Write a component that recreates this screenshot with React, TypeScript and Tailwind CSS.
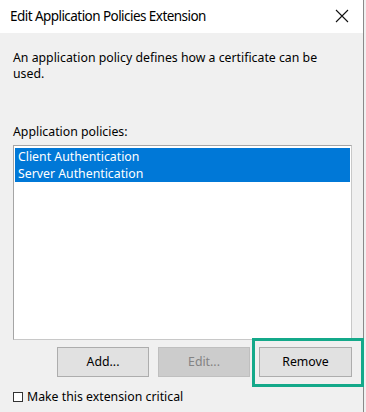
import React from "react";

export default function App() {
  const font = { fontFamily: '"Noto Sans", "Segoe UI", sans-serif' };
  return (
    <div className="w-[366px] h-[412px] bg-[#f0f0f0] flex overflow-hidden" style={font}>
      <div className="relative w-[364px] h-full border-r border-[#8a8a8a] flex flex-col text-black">
        <div className="h-[33px] bg-white flex items-center justify-between pl-[10px] pr-[14px] shrink-0">
          <span className="text-[13.5px] leading-none tracking-[-0.55px]">Edit Application Policies Extension</span>
          <svg width="14" height="14" viewBox="0 0 14 14" className="mt-[-2px]">
            <path d="M1 1 L13 13 M13 1 L1 13" stroke="#111" strokeWidth="1.1" />
          </svg>
        </div>
        <div className="flex flex-col px-[13px] pt-[17px]">
          <p className="text-[12.3px] leading-[16px] w-[330px]">
            An application policy defines how a certificate can be used.
          </p>
          <p className="text-[12.3px] leading-[16px] mt-[42px] mb-[5px]">Application policies:</p>
          <div className="w-[339px] h-[195px] bg-white border border-[#a5a5a5] border-r-[#c8c8c8] border-b-[#c8c8c8] p-[1px] pt-[2px]">
            <div className="h-[17px] bg-[#0078d7] text-white text-[12.3px] leading-[17px] pl-[3px]">Client Authentication</div>
            <div className="h-[17px] bg-[#0078d7] text-white text-[12.3px] leading-[17px] pl-[3px]">Server Authentication</div>
          </div>
          <div className="flex justify-end gap-[9px] mt-[7px] w-[339px]">
            <button className="w-[92px] h-[30px] bg-[#e1e1e1] border border-[#adadad] text-[12.3px]">Add...</button>
            <button className="w-[92px] h-[30px] bg-[#cccccc] border border-[#bfbfbf] text-[12.3px] text-[#838383]">Edit...</button>
            <button className="w-[93px] h-[30px] bg-[#e1e1e1] border border-[#adadad] text-[12.3px]">Remove</button>
          </div>
          <div className="flex items-center mt-[12px] gap-[4px]">
            <div className="w-[10px] h-[10px] border border-[#333] bg-white" />
            <span className="text-[12.3px] leading-[16px]">Make this extension critical</span>
          </div>
        </div>
        <div className="absolute left-[252px] top-[338px] w-[112px] h-[49px] border-[3px] border-[#14a98a]" />
      </div>
    </div>
  );
}
